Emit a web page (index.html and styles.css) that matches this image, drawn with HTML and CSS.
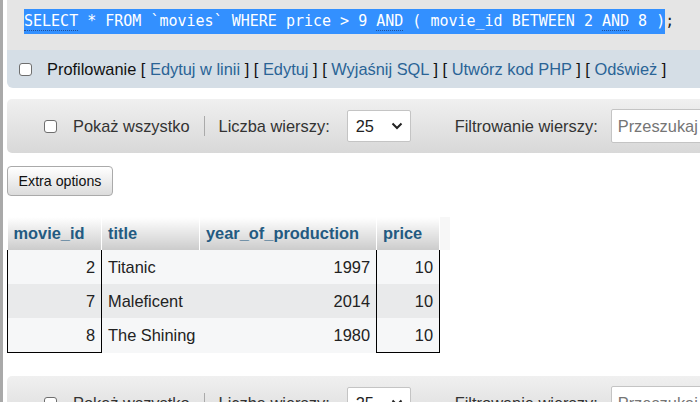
FILE: index.html
```html
<!DOCTYPE html>
<html lang="pl">
<head>
<meta charset="utf-8">
<link rel="stylesheet" href="styles.css">
</head>
<body>
<div class="frame">
  <div class="content">
    <div class="sqlbox">
      <code class="sql"><span class="sel"><span class="kw">SELECT</span> * FROM `movies` WHERE price &gt; 9 <span class="kw">AND</span> ( movie_id BETWEEN 2 <span class="kw">AND</span> 8 )</span>;</code>
    </div>
    <div class="tools">
      <span class="cb"></span>
      <span class="tools-text">Profilowanie [ <a class="lnk">Edytuj w linii</a> ] [ <a class="lnk">Edytuj</a> ] [ <a class="lnk">Wyjaśnij SQL</a> ] [ <a class="lnk">Utwórz kod PHP</a> ] [ <a class="lnk">Odśwież</a> ]</span>
    </div>

    <div class="navbar">
      <span class="cb"></span>
      <span class="nav-label show-all">Pokaż wszystko</span>
      <span class="sep"></span>
      <span class="nav-label">Liczba wierszy:</span>
      <span class="select"><span class="select-val">25</span><svg class="chev" width="12" height="8" viewBox="0 0 12 8"><path d="M1.5 1.5 L6 6 L10.5 1.5" fill="none" stroke="#222" stroke-width="2"/></svg></span>
      <span class="nav-label filter">Filtrowanie wierszy:</span>
      <span class="search">Przeszukaj</span>
    </div>

    <button class="extra">Extra options</button>

    <table class="data">
      <colgroup>
        <col class="w1"><col class="w2"><col class="w3"><col class="w4"><col class="w5">
      </colgroup>
      <thead>
        <tr>
          <th>movie_id</th>
          <th>title</th>
          <th>year_of_production</th>
          <th>price</th>
          <th class="blank"></th>
        </tr>
      </thead>
      <tbody>
        <tr class="odd">
          <td class="num mark">2</td><td>Titanic</td><td class="num">1997</td><td class="num mark">10</td>
        </tr>
        <tr class="even">
          <td class="num mark">7</td><td>Maleficent</td><td class="num">2014</td><td class="num mark">10</td>
        </tr>
        <tr class="odd last">
          <td class="num mark">8</td><td>The Shining</td><td class="num">1980</td><td class="num mark">10</td>
        </tr>
      </tbody>
    </table>

    <div class="navbar bottom">
      <span class="cb"></span>
      <span class="nav-label show-all">Pokaż wszystko</span>
      <span class="sep"></span>
      <span class="nav-label">Liczba wierszy:</span>
      <span class="select"><span class="select-val">25</span><svg class="chev" width="12" height="8" viewBox="0 0 12 8"><path d="M1.5 1.5 L6 6 L10.5 1.5" fill="none" stroke="#222" stroke-width="2"/></svg></span>
      <span class="nav-label filter">Filtrowanie wierszy:</span>
      <span class="search">Przeszukaj</span>
    </div>
  </div>
</div>
</body>
</html>
```

FILE: styles.css
```css
html, body {
  margin: 0;
  padding: 0;
  background: #fff;
}
body {
  width: 700px;
  height: 402px;
  overflow: hidden;
  font-family: "Liberation Sans", Arial, sans-serif;
  font-size: 16.4px;
  color: #333;
}
.frame {
  border-left: 3px solid #a9a9a9;
  padding-left: 4px;
  min-height: 402px;
  box-sizing: border-box;
}
.content {
  width: 760px;
}

/* SQL box */
.sqlbox {
  background: #e5e5e5;
  height: 50px;
  box-sizing: border-box;
  padding: 9px 0 0 17px;
}
.sql {
  display: block;
  font-family: "DejaVu Sans Mono", monospace;
  font-size: 15px;
  line-height: 25px;
  color: #222;
  white-space: pre;
}
.sel {
  background: #3390ff;
  color: #fff;
  display: inline-block;
  height: 25px;
}
.kw {
  border-bottom: 1px dotted #1f4f9a;
}

/* tools bar */
.tools {
  background: #d5dee6;
  height: 38px;
  border-radius: 0 0 6px 6px;
  display: flex;
  align-items: center;
  padding-left: 12px;
}
.tools-text {
  margin-left: 15px;
  color: #111;
}
.lnk {
  color: #2a6496;
  text-decoration: none;
}
.cb {
  display: inline-block;
  width: 11px;
  height: 11px;
  border: 1px solid #6e6e6e;
  border-radius: 3px;
  background: #fff;
  flex: none;
}

/* navigation bar */
.navbar {
  margin-top: 11px;
  height: 54px;
  border-radius: 5px;
  background: linear-gradient(#f0f0f0, #d8d8d8);
  display: flex;
  align-items: center;
  padding-left: 37px;
  color: #333;
}
.navbar.bottom {
  margin-top: 23px;
}
.show-all {
  margin-left: 16px;
}
.sep {
  width: 1px;
  height: 20px;
  background: #aaa;
  margin: 0 14px;
}
.select {
  margin-left: 17px;
  width: 64px;
  height: 32px;
  box-sizing: border-box;
  border: 1px solid #c4c4c4;
  border-radius: 2px;
  background: #fff;
  display: flex;
  align-items: center;
  justify-content: space-between;
  padding: 0 7px 0 8px;
  color: #222;
}
.filter {
  margin-left: 44px;
}
.search {
  margin-left: 13px;
  width: 120px;
  height: 34px;
  box-sizing: border-box;
  border: 1px solid #c4c4c4;
  border-radius: 2px;
  background: #fff;
  display: flex;
  align-items: center;
  padding-left: 6px;
  color: #757575;
}

/* extra options button */
.extra {
  display: block;
  margin-top: 13px;
  width: 106px;
  height: 30px;
  padding: 0;
  font-family: "Liberation Sans", Arial, sans-serif;
  font-size: 14.2px;
  color: #111;
  border: 1px solid #aaa;
  border-radius: 4px;
  background: linear-gradient(#ffffff, #dcdcdc);
}

/* data table */
.data {
  margin-top: 21px;
  border-collapse: collapse;
  table-layout: fixed;
  width: 443px;
}
.w1 { width: 94px; }
.w2 { width: 98px; }
.w3 { width: 177px; }
.w4 { width: 63px; }
.w5 { width: 11px; }
.data th {
  height: 33px;
  padding: 0 6px;
  text-align: left;
  font-weight: bold;
  color: #235a81;
  background: linear-gradient(#ffffff, #cccccc);
  border-right: 1px solid #fff;
  white-space: nowrap;
}
.data th.blank {
  background: #f7f7f7;
  padding: 0;
}
.data td {
  height: 34px;
  padding: 0 6px;
  color: #222;
  white-space: nowrap;
}
.data tr.odd td { background: #f6f7f8; }
.data tr.even td { background: #e9eaeb; }
.data td.num { text-align: right; }
.data td.mark {
  border-left: 1px solid #000;
  border-right: 1px solid #000;
}
.data tr.last td.mark {
  border-bottom: 1px solid #000;
}
```
